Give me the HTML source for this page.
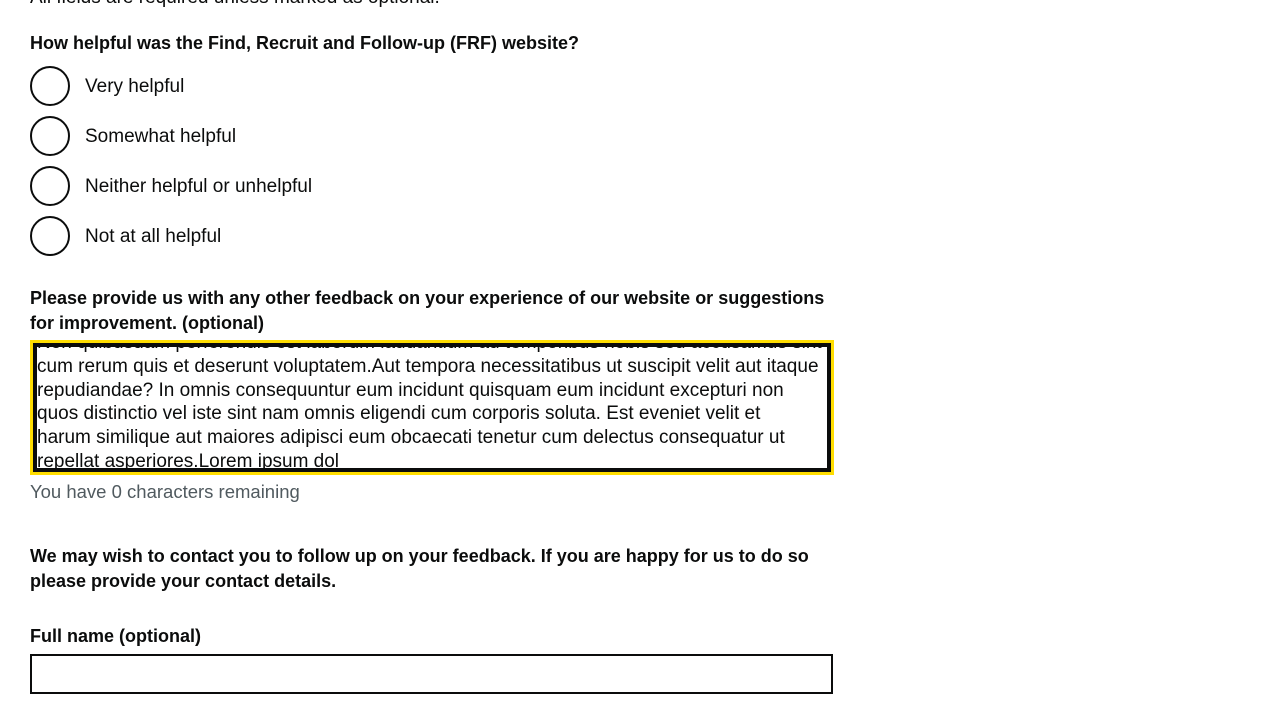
<!DOCTYPE html>
<html><head><style>
body{margin:0;width:1280px;height:720px;overflow:hidden;background:#fff;font-family:"Liberation Sans",sans-serif;color:#0b0c0c;position:relative}
.a{position:absolute;white-space:nowrap}
.b{font-weight:bold;font-size:18px}
.r{position:absolute;left:30px;width:36px;height:36px;border:2px solid #0b0c0c;border-radius:50%}
.l{font-size:19px;left:85px}
.ta{position:absolute;left:30px;top:340px;width:798px;height:129px;border:3px solid #ffdd00;overflow:hidden}
.ti{position:absolute;left:0;top:0;right:0;bottom:0;border:4px solid #0b0c0c;background:#fff;overflow:hidden}
.ti div{position:absolute;left:0;font-size:19px;white-space:nowrap;letter-spacing:0}
</style></head><body>
<div class="a" style="top:-13px;left:30px;font-size:19px">All fields are required unless marked as optional.</div>
<div class="a b" style="top:33px;left:30px">How helpful was the Find, Recruit and Follow-up (FRF) website?</div>
<div class="r" style="top:66px"></div><div class="a l" style="top:76px">Very helpful</div>
<div class="r" style="top:116px"></div><div class="a l" style="top:126px">Somewhat helpful</div>
<div class="r" style="top:166px"></div><div class="a l" style="top:176px">Neither helpful or unhelpful</div>
<div class="r" style="top:216px"></div><div class="a l" style="top:226px">Not at all helpful</div>
<div class="a b" style="top:288px;left:30px">Please provide us with any other feedback on your experience of our website or suggestions</div>
<div class="a b" style="top:313px;left:30px">for improvement. (optional)</div>
<div class="ta"><div class="ti">
<div style="top:-15px">Non quibusdam perferendis est laborum laudantium ad temporibus nobis sed accusamus sint</div>
<div style="top:9px">cum rerum quis et deserunt voluptatem.Aut tempora necessitatibus ut suscipit velit aut itaque</div>
<div style="top:33px">repudiandae? In omnis consequuntur eum incidunt quisquam eum incidunt excepturi non</div>
<div style="top:56px">quos distinctio vel iste sint nam omnis eligendi cum corporis soluta. Est eveniet velit et</div>
<div style="top:80px">harum similique aut maiores adipisci eum obcaecati tenetur cum delectus consequatur ut</div>
<div style="top:104px">repellat asperiores.Lorem ipsum dol</div>
</div></div>
<div class="a" style="top:481px;left:30px;font-size:18.5px;color:#505a5f">You have 0 characters remaining</div>
<div class="a b" style="top:546px;left:30px">We may wish to contact you to follow up on your feedback. If you are happy for us to do so</div>
<div class="a b" style="top:571px;left:30px">please provide your contact details.</div>
<div class="a b" style="top:626px;left:30px">Full name (optional)</div>
<div style="position:absolute;left:30px;top:654px;width:799px;height:36px;border:2px solid #0b0c0c"></div>
</body></html>
